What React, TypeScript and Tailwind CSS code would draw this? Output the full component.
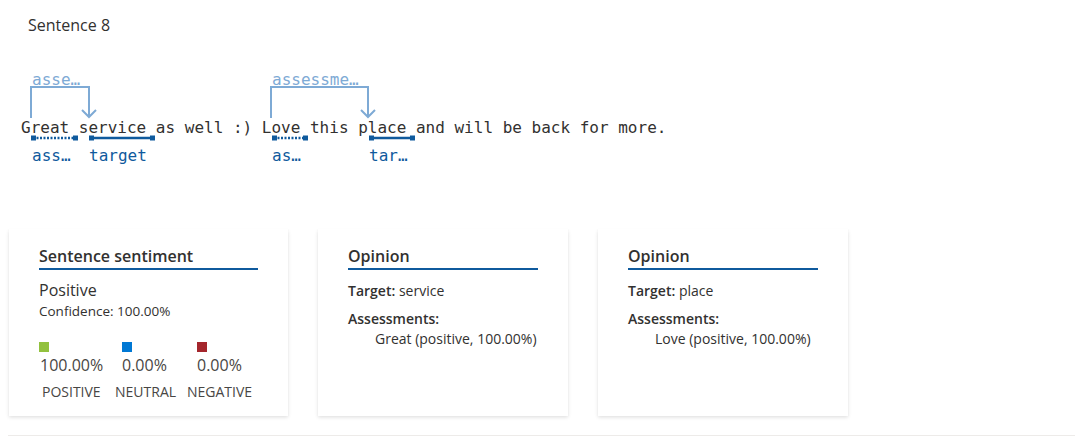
const mono = "font-['DejaVu_Sans_Mono',monospace]";

function Annotation() {
  return (
    <div className={`relative h-[120px] ${mono} text-[16px] leading-[20px]`}>
      <svg className="absolute inset-0 w-full h-full pointer-events-none" fill="none">
        <g stroke="#7eaad5" strokeWidth="2">
          <path d="M31 58 V27 H89 V57" />
          <path d="M82 50 L89 57 L96 50" />
          <path d="M271 58 V27 H368 V57" />
          <path d="M361 50 L368 57 L375 50" />
        </g>
        <g stroke="#0f5a9d" fill="#0f5a9d">
          <line x1="33" y1="78" x2="76" y2="78" strokeWidth="2.5" strokeDasharray="2 1.5" />
          <rect x="31" y="75.5" width="5" height="5" stroke="none" />
          <rect x="73" y="75.5" width="5" height="5" stroke="none" />
          <line x1="89" y1="78" x2="155" y2="78" strokeWidth="2.5" />
          <rect x="89" y="75.5" width="5" height="5" stroke="none" />
          <rect x="150" y="75.5" width="5" height="5" stroke="none" />
          <line x1="274" y1="78" x2="306" y2="78" strokeWidth="2.5" strokeDasharray="2 1.5" />
          <rect x="272" y="75.5" width="5" height="5" stroke="none" />
          <rect x="303" y="75.5" width="5" height="5" stroke="none" />
          <line x1="369" y1="78" x2="415" y2="78" strokeWidth="2.5" />
          <rect x="369" y="75.5" width="5" height="5" stroke="none" />
          <rect x="410" y="75.5" width="5" height="5" stroke="none" />
        </g>
      </svg>

      <span className="absolute left-[32px] top-[10px] w-[52px] truncate text-[#7eaad5]">assessment</span>
      <span className="absolute left-[272px] top-[10px] w-[90px] truncate text-[#7eaad5]">assessment</span>

      <p className="pl-[21px] pt-[58px] text-[#323130] whitespace-pre">
        Great service as well :) Love this place and will be back for more.
      </p>

      <span className="absolute left-[32px] top-[86px] w-[47px] truncate text-[#0f5a9d]">assessment</span>
      <span className="absolute left-[89px] top-[86px] w-[62px] truncate text-[#0f5a9d]">target</span>
      <span className="absolute left-[272px] top-[86px] w-[36px] truncate text-[#0f5a9d]">assessment</span>
      <span className="absolute left-[369px] top-[86px] w-[46px] truncate text-[#0f5a9d]">target</span>
    </div>
  );
}

function CardTitle({ children }: { children: string }) {
  return (
    <div className="border-b-2 border-[#0f5a9d] text-[16px] leading-[24px] font-semibold text-[#323130]">
      {children}
    </div>
  );
}

const card =
  "bg-white h-[187px] px-[30px] pt-[15px] shadow-[0_1.6px_3.6px_0_rgba(0,0,0,0.13),0_0.3px_0.9px_0_rgba(0,0,0,0.11)]";

function SentimentCard() {
  const cols = [
    { color: "bg-[#92c13e]", value: "100.00%", label: "POSITIVE", vm: "ml-[1px]", lm: "ml-[3px]" },
    { color: "bg-[#0078d4]", value: "0.00%", label: "NEUTRAL", vm: "ml-0", lm: "-ml-[7px]" },
    { color: "bg-[#a4262c]", value: "0.00%", label: "NEGATIVE", vm: "ml-0", lm: "-ml-[10px]" },
  ];
  return (
    <div className={`${card} w-[279px]`}>
      <CardTitle>Sentence sentiment</CardTitle>
      <div className="mt-[9px] text-[16px] leading-[22px] text-[#323130]">Positive</div>
      <div className="mt-[1px] text-[13.5px] leading-[18px] text-[#323130]">Confidence: 100.00%</div>
      <div className="mt-[22px] grid grid-cols-[83px_75px_auto]">
        {cols.map((c) => (
          <div key={c.label} className="flex flex-col">
            <div className={`w-[10px] h-[10px] ${c.color}`} />
            <div className={`mt-[2px] ${c.vm} text-[16px] leading-[22px] text-[#484644]`}>{c.value}</div>
            <div className={`mt-[7px] ${c.lm} text-[14px] leading-[18px] text-[#484644] whitespace-nowrap`}>
              {c.label}
            </div>
          </div>
        ))}
      </div>
    </div>
  );
}

function OpinionCard({ target, assessment }: { target: string; assessment: string }) {
  return (
    <div className={`${card} w-[250px]`}>
      <CardTitle>Opinion</CardTitle>
      <div className="mt-[12px] text-[14px] leading-[18px] text-[#323130]">
        <span className="font-semibold">Target:</span> {target}
      </div>
      <div className="mt-[10px] text-[14px] leading-[18px] text-[#323130]">
        <div className="font-semibold">Assessments:</div>
        <div className="pl-[27px] mt-[2px]">{assessment}</div>
      </div>
    </div>
  );
}

export default function App() {
  return (
    <div className="w-full h-[441px] bg-white font-['Open_Sans',sans-serif] overflow-hidden">
      <div className="h-[60px] pl-[28px] pt-[14px] text-[16px] leading-[22px] text-[#323130]">Sentence 8</div>
      <Annotation />
      <div className="mt-[49px] pl-[9px] flex gap-[30px]">
        <SentimentCard />
        <OpinionCard target="service" assessment="Great (positive, 100.00%)" />
        <OpinionCard target="place" assessment="Love (positive, 100.00%)" />
      </div>
      <div className="mt-[19px] ml-[8px] border-t border-[#edebe9]" />
    </div>
  );
}
